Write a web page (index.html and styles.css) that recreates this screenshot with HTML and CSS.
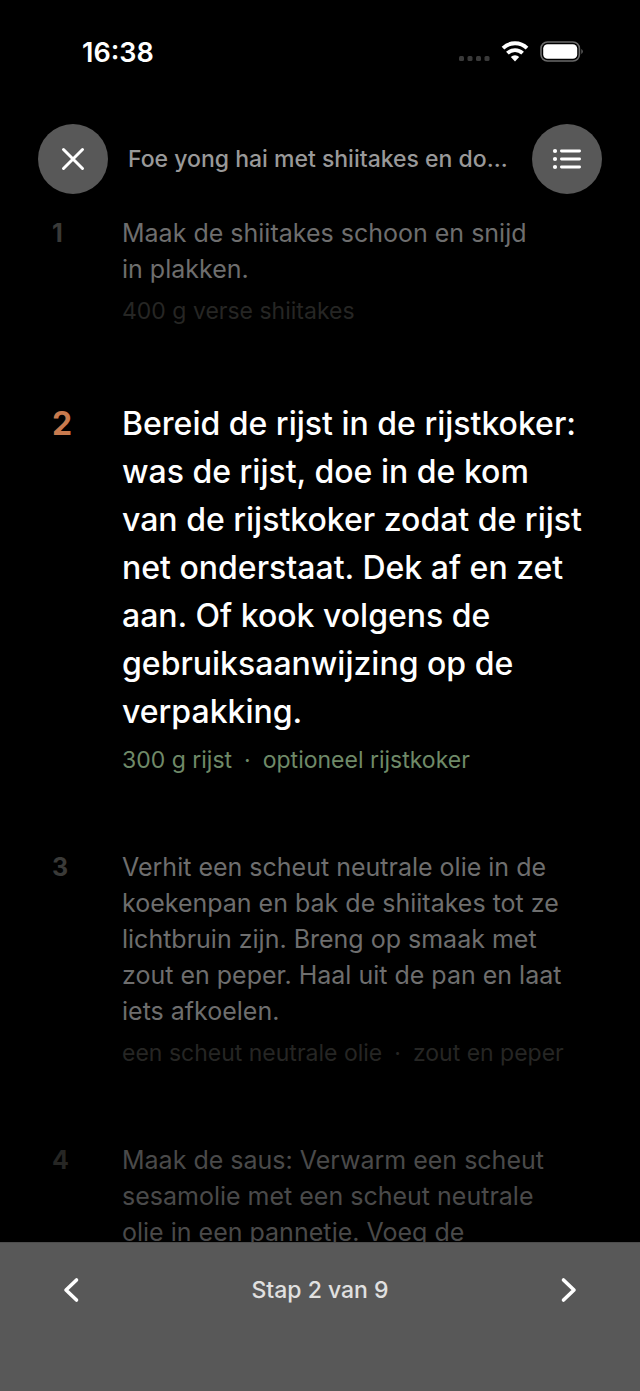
FILE: index.html
```
<!DOCTYPE html>
<html lang="nl">
<head>
    <meta charset="UTF-8">
    <meta name="viewport" content="width=device-width, initial-scale=1.0">
    <title>Foe yong hai met shiitakes</title>
    <link rel="stylesheet" href="styles.css">
</head>
<body>

    <div class="status-bar">
        <span class="time">16:38</span>
        <div class="status-icons">
            <svg width="32" height="24" viewBox="0 0 32 24" fill="#3a3a3a">
                <rect x="1" y="16" width="5" height="5" rx="1.5"/>
                <rect x="9.5" y="16" width="5" height="5" rx="1.5"/>
                <rect x="18" y="16" width="5" height="5" rx="1.5"/>
                <rect x="26.5" y="16" width="5" height="5" rx="1.5"/>
            </svg>
            <svg width="28" height="24" viewBox="0 0 28 24" fill="none" stroke="#fff" stroke-width="3.8">
                <path d="M2 8.2 A17 17 0 0 1 26 8.2"/>
                <path d="M6.4 13.2 A10.8 10.8 0 0 1 21.6 13.2"/>
                <path d="M9.8 17 A6 6 0 0 1 18.2 17 L14 21.4 Z" fill="#fff" stroke="none"/>
            </svg>
            <svg width="44" height="24" viewBox="0 0 44 24">
                <rect x="1" y="2" width="38.4" height="19" rx="6.5" fill="none" stroke="#6a6a6a" stroke-width="1.6"/>
                <rect x="3.2" y="4.2" width="34" height="14.6" rx="4.4" fill="#fff"/>
                <path d="M41.4 9 A3 3 0 0 1 41.4 14 Z" fill="#6a6a6a"/>
            </svg>
        </div>
    </div>

    <header class="header">
        <button class="round-button" aria-label="Sluiten">
            <svg width="24" height="24" viewBox="0 0 24 24" fill="none" stroke="#fff" stroke-width="3" stroke-linecap="round">
                <path d="M2.5 2.5 L21.5 21.5 M21.5 2.5 L2.5 21.5"/>
            </svg>
        </button>
        <h1 class="title">Foe yong hai met shiitakes en do…</h1>
        <button class="round-button" aria-label="Alle stappen">
            <svg width="30" height="24" viewBox="0 0 30 24" fill="#fff">
                <circle cx="3" cy="4" r="2.1"/>
                <circle cx="3" cy="12" r="2.1"/>
                <circle cx="3" cy="20" r="2.1"/>
                <rect x="8" y="2.6" width="21" height="2.8" rx="1.4"/>
                <rect x="8" y="10.6" width="21" height="2.8" rx="1.4"/>
                <rect x="8" y="18.6" width="21" height="2.8" rx="1.4"/>
            </svg>
        </button>
    </header>

    <main class="steps">
        <section class="step">
            <div class="number">1</div>
            <div>
                <p class="text">Maak de shiitakes schoon en snijd<br>in plakken.</p>
                <p class="ingredients">400 g verse shiitakes</p>
            </div>
        </section>

        <section class="step active">
            <div class="number">2</div>
            <div>
                <p class="text">Bereid de rijst in de rijstkoker:<br>was de rijst, doe in de kom<br>van de rijstkoker zodat de rijst<br>net onderstaat. Dek af en zet<br>aan. Of kook volgens de<br>gebruiksaanwijzing op de<br>verpakking.</p>
                <p class="ingredients">300 g rijst<span class="dot">·</span>optioneel rijstkoker</p>
            </div>
        </section>

        <section class="step">
            <div class="number">3</div>
            <div>
                <p class="text">Verhit een scheut neutrale olie in de<br>koekenpan en bak de shiitakes tot ze<br>lichtbruin zijn. Breng op smaak met<br>zout en peper. Haal uit de pan en laat<br>iets afkoelen.</p>
                <p class="ingredients">een scheut neutrale olie<span class="dot">·</span>zout en peper</p>
            </div>
        </section>

        <section class="step far">
            <div class="number">4</div>
            <div>
                <p class="text">Maak de saus: Verwarm een scheut<br>sesamolie met een scheut neutrale<br>olie in een pannetje. Voeg de</p>
            </div>
        </section>
    </main>

    <footer class="footer">
        <button class="nav-button" aria-label="Vorige stap">
            <svg width="18" height="28" viewBox="0 0 18 28" fill="none" stroke="#fff" stroke-width="3.6" stroke-linecap="round" stroke-linejoin="round">
                <path d="M14.5 4 L4 14 L14.5 24"/>
            </svg>
        </button>
        <span class="progress">Stap 2 van 9</span>
        <button class="nav-button" aria-label="Volgende stap">
            <svg width="18" height="28" viewBox="0 0 18 28" fill="none" stroke="#fff" stroke-width="3.6" stroke-linecap="round" stroke-linejoin="round">
                <path d="M3.5 4 L14 14 L3.5 24"/>
            </svg>
        </button>
    </footer>

</body>
</html>
```
FILE: styles.css
```
* {
    box-sizing: border-box;
}
body {
    font-family: Inter, "Liberation Sans", sans-serif;
    display: flex;
    flex-direction: column;
    height: 100vh;
    margin: 0;
    background-color: #000;
    color: #fff;
}
h1, p {
    margin: 0;
}
button {
    padding: 0;
    border: none;
    background: none;
    cursor: pointer;
}
svg {
    display: block;
}
.status-bar {
    display: flex;
    flex-shrink: 0;
    align-items: center;
    justify-content: space-between;
    height: 104px;
    padding: 0 56px 0 82px;
}
.time {
    font-size: 27px;
    font-weight: 600;
}
.status-icons {
    display: flex;
    gap: 11px;
}
.header {
    display: flex;
    flex-shrink: 0;
    align-items: center;
    gap: 20px;
    padding: 20px 38px;
}
.round-button {
    display: flex;
    flex-shrink: 0;
    align-items: center;
    justify-content: center;
    width: 70px;
    height: 70px;
    border-radius: 50%;
    background-color: #585858;
}
.title {
    flex: 1;
    overflow: hidden;
    white-space: nowrap;
    text-overflow: ellipsis;
    font-size: 23px;
    font-weight: 500;
    line-height: 32px;
    color: #999;
}
.steps {
    display: flex;
    flex: 1;
    flex-direction: column;
    gap: 74px;
    min-height: 0;
    overflow: hidden;
    padding: 1px 40px 0 52px;
}
.step {
    display: grid;
    flex-shrink: 0;
    grid-template-columns: 70px 1fr;
}
.number {
    font-size: 25px;
    font-weight: 700;
    line-height: 36px;
    color: #3a3a38;
}
.text {
    font-size: 25px;
    line-height: 36px;
    white-space: nowrap;
    color: #6e6e6e;
}
.ingredients {
    margin-top: 9px;
    font-size: 23px;
    line-height: 30px;
    white-space: nowrap;
    color: #262624;
}
.dot {
    margin: 0 12px;
}
.active .number {
    font-size: 32px;
    line-height: 48px;
    color: #c87a4e;
}
.active .text {
    font-size: 32px;
    font-weight: 500;
    line-height: 48px;
    color: #fff;
}
.active .ingredients {
    color: #6f8a68;
}
.far .number {
    color: #262624;
}
.far .text {
    color: #4a4a4a;
}
.footer {
    display: flex;
    flex-shrink: 0;
    align-items: flex-start;
    justify-content: space-between;
    height: 149px;
    padding: 24px 48px;
    border-top: 1px solid #4c4c4c;
    background-color: #585858;
}
.nav-button {
    display: flex;
    align-items: center;
    justify-content: center;
    width: 46px;
    height: 46px;
}
.progress {
    font-size: 23px;
    font-weight: 500;
    line-height: 46px;
    color: #e0e0e0;
}
```
